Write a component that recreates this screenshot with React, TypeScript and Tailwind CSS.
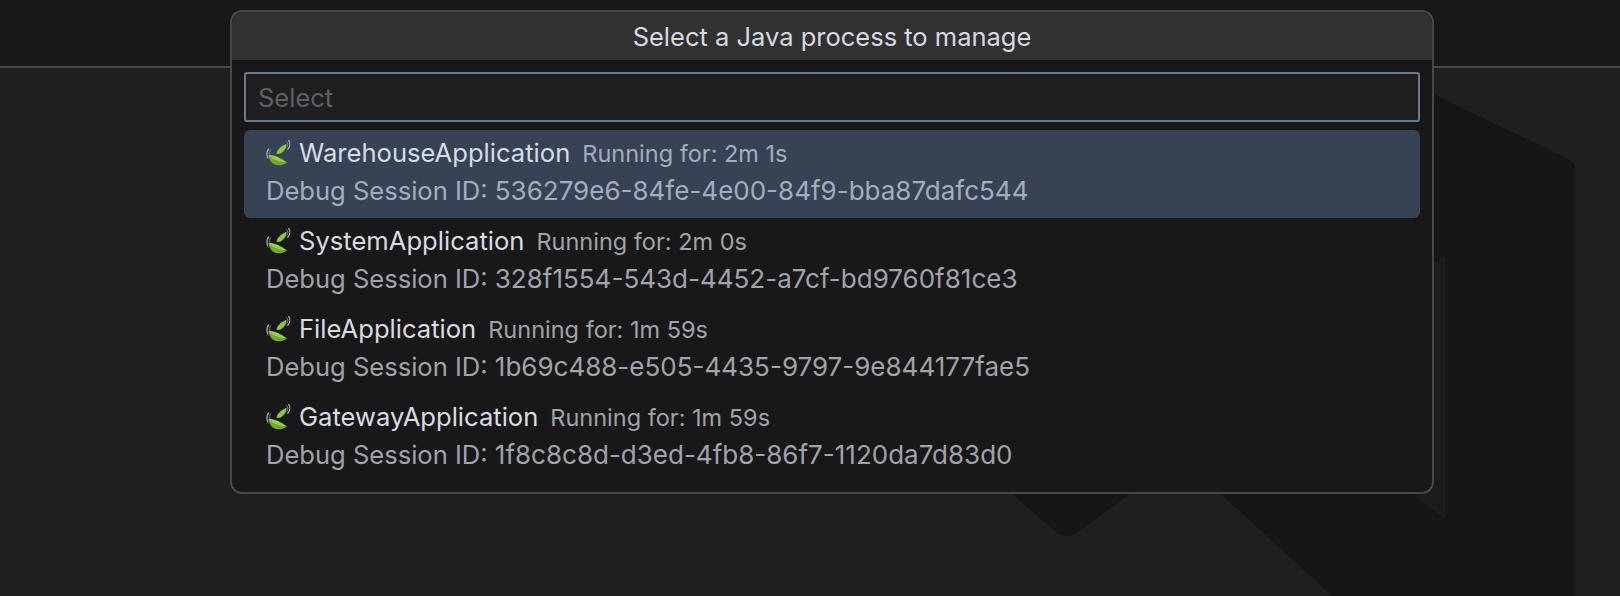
const processes = [
  { name: "WarehouseApplication", time: "2m 1s", id: "536279e6-84fe-4e00-84f9-bba87dafc544", active: true },
  { name: "SystemApplication", time: "2m 0s", id: "328f1554-543d-4452-a7cf-bd9760f81ce3", active: false },
  { name: "FileApplication", time: "1m 59s", id: "1b69c488-e505-4435-9797-9e844177fae5", active: false },
  { name: "GatewayApplication", time: "1m 59s", id: "1f8c8c8d-d3ed-4fb8-86f7-1120da7d83d0", active: false },
]

function SpringLeaf() {
  return (
    <svg width="28" height="28" viewBox="0 0 28 28" className="shrink-0">
      <path d="M3 8.5 C0.5 11 0.3 15.5 2 18.5" fill="none" stroke="#b4b8ba" strokeWidth="1.2" />
      <path d="M5 9.5 C3.2 11.5 3 14 3.8 16" fill="none" stroke="#7d8285" strokeWidth="1" />
      <path d="M22.5 0 C24.5 3 24 7 21.5 9.5" fill="none" stroke="#b4b8ba" strokeWidth="1.2" />
      <path d="M20.5 1.5 C22 3.5 21.8 5.5 20.8 7" fill="none" stroke="#7d8285" strokeWidth="1" />
      <path d="M2.5 15 C8 14.5 15 17.5 21 22.5 C17 25.5 12 26 8.5 24.5 C5 23 3 19 2.5 15 Z" fill="#6fa733" />
      <path d="M2.5 15 C8 15 14 18 21 22.5 C15 21.5 6.5 20.5 2.5 15 Z" fill="#98d04c" />
      <path d="M10.5 14 C11 9.5 15 6 20.5 4 C20.5 9 16.5 14.5 10.5 14 Z" fill="#8ec63f" />
    </svg>
  )
}

function Watermark() {
  return (
    <svg className="absolute inset-0" width="1620" height="596" viewBox="0 0 1620 596">
      <path d="M1400 80 L1440 97 Q1447 100 1452 103 L1572 161 Q1575 163 1575 166 L1575 596 L1332 596 L1221 494 L1200 300 Z" fill="#161616" />
      <path d="M1445 255 L1445 519 L1415 496 L1400 290 Z" fill="#1c1c1c" />
      <path d="M1012 494 L1056 532 Q1067 540 1078 532 L1130 494 Z" fill="#161616" />
    </svg>
  )
}

export default function App() {
  return (
    <div className="relative w-[1620px] h-[596px] overflow-hidden bg-[#1f1f1f] font-['Inter',sans-serif]">
      <Watermark />
      <div className="relative h-[68px] bg-[#181818] border-b-2 border-[#47474a]" />

      <div className="absolute left-[230px] top-[10px] w-[1204px] rounded-xl border-2 border-[#47474b] bg-[#181818] overflow-hidden">
        <div className="h-[48px] pt-[2px] flex items-center justify-center bg-[#313131] text-[25.5px] text-[#d6dbe2]">
          Select a Java process to manage
        </div>
        <div className="px-[12px] pt-[12px] pb-[10px]">
          <div className="h-[50px] pt-[2px] flex items-center px-[12px] rounded-[3px] border-2 border-[#6a7a94] bg-[#1e1e1e] text-[25.5px] text-[#5f5f66]">
            Select
          </div>
          <div className="mt-[8px]">
            {processes.map((p) => (
              <div key={p.id} className={p.active ? "h-[88px] rounded-md bg-[#374254] pl-[22px] pt-[3px]" : "h-[88px] rounded-md pl-[22px] pt-[3px]"}>
                <div className="h-[41px] flex items-center">
                  <SpringLeaf />
                  <span className={p.active ? "ml-[5px] text-[25.6px] text-[#d5dde9]" : "ml-[5px] text-[25.6px] text-[#d9dde3]"}>{p.name}</span>
                  <span className={p.active ? "ml-[12px] text-[23.5px] text-[#a3aebd]" : "ml-[12px] text-[23.5px] text-[#a0a4ab]"}>Running for: {p.time}</span>
                </div>
                <div className={p.active ? "text-[25.55px] leading-[34px] text-[#a3aebd]" : "text-[25.55px] leading-[34px] text-[#a0a4ab]"}>
                  Debug Session ID: <span className="text-[26px]">{p.id}</span>
                </div>
              </div>
            ))}
          </div>
        </div>
      </div>
    </div>
  )
}
